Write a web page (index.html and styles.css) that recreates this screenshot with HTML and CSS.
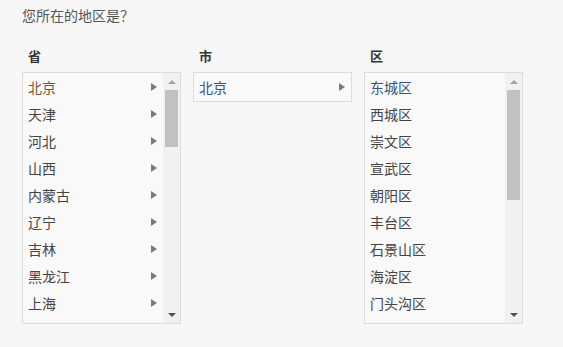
FILE: index.html
```html
<!DOCTYPE html>
<html lang="zh-CN">
<head>
    <meta charset="UTF-8">
    <meta name="viewport" content="width=device-width, initial-scale=1.0">
    <title>地区选择</title>
    <link rel="stylesheet" href="styles.css">
</head>
<body>
    <p class="question">您所在的地区是？</p>
    <div class="picker">
      <div class="col">
        <h3 class="head">省</h3>
        <div class="box tall">
          <ul class="list">
            <li class="item on-prov">北京</li>
            <li class="item">天津</li>
            <li class="item">河北</li>
            <li class="item">山西</li>
            <li class="item">内蒙古</li>
            <li class="item">辽宁</li>
            <li class="item">吉林</li>
            <li class="item">黑龙江</li>
            <li class="item">上海</li>
            <li class="item">江苏</li>
            <li class="item">浙江</li>
            <li class="item">安徽</li>
            <li class="item">福建</li>
            <li class="item">江西</li>
            <li class="item">山东</li>
            <li class="item">河南</li>
            <li class="item">湖北</li>
            <li class="item">湖南</li>
            <li class="item">广东</li>
            <li class="item">广西</li>
            <li class="item">海南</li>
            <li class="item">重庆</li>
            <li class="item">四川</li>
            <li class="item">贵州</li>
            <li class="item">云南</li>
            <li class="item">西藏</li>
            <li class="item">陕西</li>
            <li class="item">甘肃</li>
            <li class="item">青海</li>
            <li class="item">宁夏</li>
            <li class="item">新疆</li>
            <li class="item">香港</li>
            <li class="item">澳门</li>
            <li class="item">台湾</li>
            <li class="item">海外</li>
          </ul>
          <div class="bar">
            <span class="btn up"></span>
            <div class="track"><span class="thumb" style="height:57px"></span></div>
            <span class="btn down"></span>
          </div>
        </div>
      </div>
      <div class="col">
        <h3 class="head">市</h3>
        <div class="box">
          <ul class="list">
            <li class="item on">北京</li>
          </ul>
        </div>
      </div>
      <div class="col">
        <h3 class="head">区</h3>
        <div class="box tall">
          <ul class="list">
            <li class="item leaf on">东城区</li>
            <li class="item leaf">西城区</li>
            <li class="item leaf">崇文区</li>
            <li class="item leaf">宣武区</li>
            <li class="item leaf">朝阳区</li>
            <li class="item leaf">丰台区</li>
            <li class="item leaf">石景山区</li>
            <li class="item leaf">海淀区</li>
            <li class="item leaf">门头沟区</li>
            <li class="item leaf">房山区</li>
            <li class="item leaf">通州区</li>
            <li class="item leaf">顺义区</li>
            <li class="item leaf">昌平区</li>
            <li class="item leaf">大兴区</li>
            <li class="item leaf">怀柔区</li>
            <li class="item leaf">平谷区</li>
            <li class="item leaf">密云县</li>
            <li class="item leaf">延庆县</li>
          </ul>
          <div class="bar">
            <span class="btn up"></span>
            <div class="track"><span class="thumb" style="height:110px"></span></div>
            <span class="btn down"></span>
          </div>
        </div>
      </div>
    </div>
</body>
</html>
```

FILE: styles.css
```css
body{
  margin: 0;
  padding: 6px 22px;
  background-color: #f7f7f7;
  color: #444;
  font-family: "Noto Sans CJK SC", "Noto Sans", sans-serif;
  font-size: 14px;
}
.question{
  margin: 0;
  line-height: 18px;
  color: #555;
}
.picker{
  display: flex;
  gap: 12px;
  margin-top: 22px;
  align-items: flex-start;
}
.col{
  width: 159px;
}
.head{
  margin: 0 0 6px 6px;
  font-size: 13px;
  line-height: 20px;
  font-weight: bold;
  color: #333;
}
.box{
  display: flex;
  border: 1px solid #dcdcdc;
  background-color: #f9f9f9;
}
.tall{
  height: 250px;
}
.list{
  flex: 1;
  list-style: none;
  margin: 0;
  padding: 0 0 1px;
  overflow: hidden;
}
.tall .list{
  padding: 0;
}
.item{
  display: flex;
  align-items: center;
  justify-content: space-between;
  height: 27px;
  padding: 0 6px 0 5px;
  cursor: pointer;
}
.item::after{
  content: "";
  border-left: 6px solid #7a7a7a;
  border-top: 4px solid transparent;
  border-bottom: 4px solid transparent;
}
.leaf::after{
  display: none;
}
.on-prov{
  color: #7a5532;
}
.on{
  color: #34557a;
}

/* scrollbar */
.bar{
  display: flex;
  flex-direction: column;
  width: 17px;
  background-color: #f1f1f1;
}
.btn{
  display: flex;
  align-items: center;
  justify-content: center;
  height: 17px;
}
.btn::before{
  content: "";
  border-left: 4px solid transparent;
  border-right: 4px solid transparent;
}
.up::before{
  border-bottom: 4px solid #a3a3a3;
}
.down::before{
  border-top: 4px solid #505050;
}
.track{
  flex: 1;
  padding: 0 2px;
}
.thumb{
  display: block;
  background-color: #c1c1c1;
}
```
